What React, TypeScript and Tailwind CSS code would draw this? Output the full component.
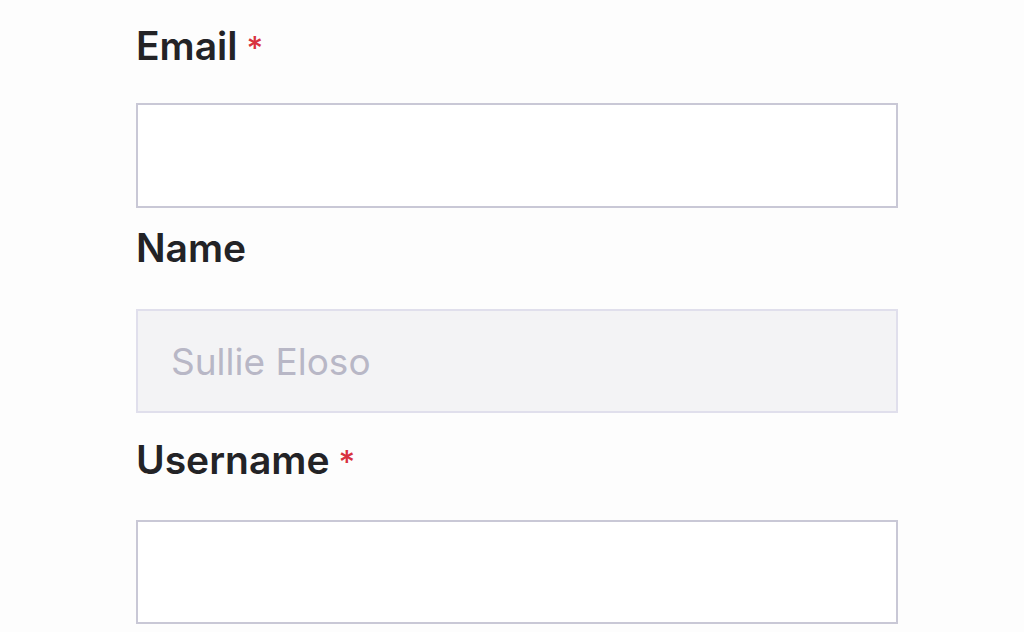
export default function App() {
  return (
    <div className="min-h-[632px] w-full bg-[#fdfdfd] font-['Inter','Noto_Sans',sans-serif]">
      <div className="ml-[136px] flex w-[762px] flex-col pt-[23px]">
        <label className="mb-[34px] flex h-[46px] items-baseline text-[39px] leading-[46px] font-semibold text-[#232326]">
          Email
          <span className="ml-[9px] text-[32px] leading-none font-medium text-[#d8323f]">*</span>
        </label>
        <input
          type="email"
          className="h-[105px] w-full border-2 border-[#c9c8d6] bg-white px-[34px] text-[37px] outline-none"
        />

        <label className="mt-[17px] mb-[38px] flex h-[46px] items-baseline text-[39px] leading-[46px] font-semibold text-[#232326]">
          Name
        </label>
        <input
          type="text"
          disabled
          placeholder="Sullie Eloso"
          className="h-[104px] w-full border-2 border-[#e0dfec] bg-[#f3f3f5] px-[33px] text-[37px] text-[#b8b7c6] placeholder:text-[#b8b7c6] outline-none"
        />

        <label className="mt-[24px] mb-[37px] flex h-[46px] items-baseline text-[39px] leading-[46px] font-semibold text-[#232326]">
          Username
          <span className="ml-[9px] text-[32px] leading-none font-medium text-[#d8323f]">*</span>
        </label>
        <input
          type="text"
          className="h-[104px] w-full border-2 border-[#c9c8d6] bg-white px-[34px] text-[37px] outline-none"
        />
      </div>
    </div>
  );
}
